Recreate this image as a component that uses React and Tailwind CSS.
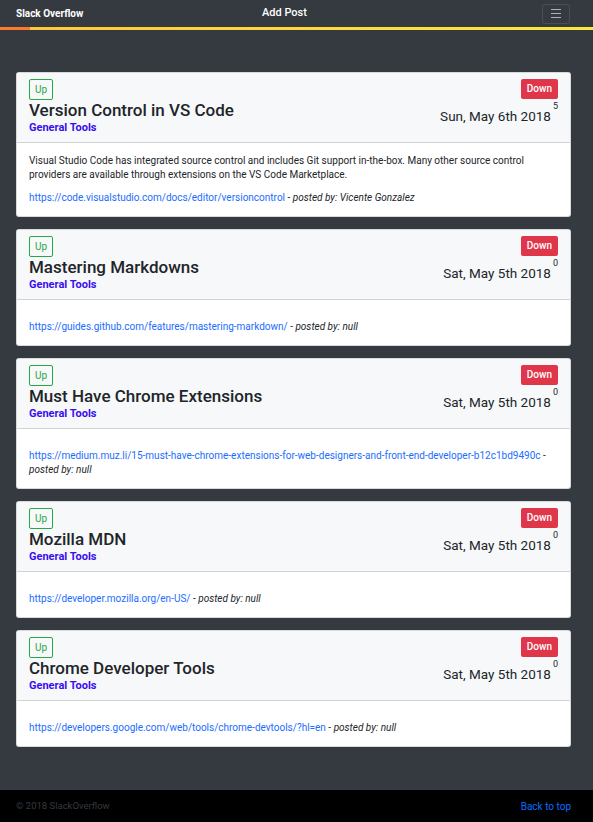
import React from 'react'

const posts = [
    {
        title: 'Version Control in VS Code',
        date: 'Sun, May 6th 2018',
        votes: 5,
        body: 'Visual Studio Code has integrated source control and includes Git support in-the-box. Many other source control providers are available through extensions on the VS Code Marketplace.',
        url: 'https://code.visualstudio.com/docs/editor/versioncontrol',
        author: 'Vicente Gonzalez',
    },
    {
        title: 'Mastering Markdowns',
        date: 'Sat, May 5th 2018',
        votes: 0,
        body: '',
        url: 'https://guides.github.com/features/mastering-markdown/',
        author: 'null',
    },
    {
        title: 'Must Have Chrome Extensions',
        date: 'Sat, May 5th 2018',
        votes: 0,
        body: '',
        url: 'https://medium.muz.li/15-must-have-chrome-extensions-for-web-designers-and-front-end-developer-b12c1bd9490c',
        author: 'null',
    },
    {
        title: 'Mozilla MDN',
        date: 'Sat, May 5th 2018',
        votes: 0,
        body: '',
        url: 'https://developer.mozilla.org/en-US/',
        author: 'null',
    },
    {
        title: 'Chrome Developer Tools',
        date: 'Sat, May 5th 2018',
        votes: 0,
        body: '',
        url: 'https://developers.google.com/web/tools/chrome-devtools/?hl=en',
        author: 'null',
    },
]

const PostCard = ({ post }) => (
    <div className="bg-white rounded-[3px] border border-black/15 overflow-hidden">
        {/* Header */}
        <div className="flex justify-between bg-[#f7f8f9] border-b border-black/15 px-3 pt-[6px] pb-[7px]">
            <div className="flex flex-col items-start">
                <button className="h-[21px] px-[5px] text-[10px] leading-none text-[#28a745] border border-[#28a745] rounded-[2px]">
                    Up
                </button>
                <h3 className="text-[17px] leading-[21px] font-medium text-[#212529]">{post.title}</h3>
                <span className="text-[11px] leading-[14px] font-bold text-[#3a0ef0]">General Tools</span>
            </div>
            <div className="flex flex-col items-end">
                <button className="h-[20px] px-[6px] text-[10px] leading-none font-medium text-white bg-[#e0364a] rounded-[2px]">
                    Down
                </button>
                <div className="mt-[3px] text-[13.5px] leading-[17px] text-[#212529] flex items-start">
                    <span className="mt-[6px]">{post.date}</span>
                    <sup className="text-[9px] leading-none top-0 ml-[2px]">{post.votes}</sup>
                </div>
            </div>
        </div>
        {/* Body */}
        <div className="px-3 pt-[11px] pb-[11px] text-[10px] leading-[14px] text-[#212529]">
            <p className="mb-[9px]">{post.body}</p>
            <p>
                <a className="text-[#1a6dff]" href="#">{post.url}</a>
                {' - '}
                <i>posted by: {post.author}</i>
            </p>
        </div>
    </div>
)

export default function App() {
    return (
        <div
            className="min-h-[822px] flex flex-col bg-[#343a40]"
            style={{ fontFamily: 'Roboto, "Noto Sans", sans-serif' }}
        >
            {/* Navbar */}
            <nav className="h-[27px] flex items-center pl-4 pr-[23px] text-white text-[11px]">
                <span className="font-bold text-[10px] w-[246px]">Slack Overflow</span>
                <span className="font-medium">Add Post</span>
                <button className="ml-auto w-[28px] h-[20px] flex flex-col items-center justify-center gap-[3px] border border-white/10 rounded-[3px]">
                    <span className="block w-[10px] h-px bg-white/60"></span>
                    <span className="block w-[10px] h-px bg-white/60"></span>
                    <span className="block w-[10px] h-px bg-white/60"></span>
                </button>
            </nav>
            <div className="h-[3px] flex">
                <div className="w-[30px] bg-[#fe7a2a]"></div>
                <div className="flex-1 bg-gradient-to-r from-[#ffc73a] via-[#fed93d] to-[#fbe73e]"></div>
            </div>

            {/* Posts */}
            <main className="flex-1 pl-4 pr-[22px] pt-[42px] pb-[42px] flex flex-col gap-[12px]">
                {posts.map((p) => (
                    <PostCard key={p.title} post={p} />
                ))}
            </main>

            {/* Footer */}
            <footer className="h-[32px] bg-black flex items-center justify-between pl-4 pr-[22px] text-[10px]">
                <span className="text-[#343a40] text-[9.5px]">© 2018 SlackOverflow</span>
                <a href="#" className="text-[#0a6cff]">Back to top</a>
            </footer>
        </div>
    )
}
